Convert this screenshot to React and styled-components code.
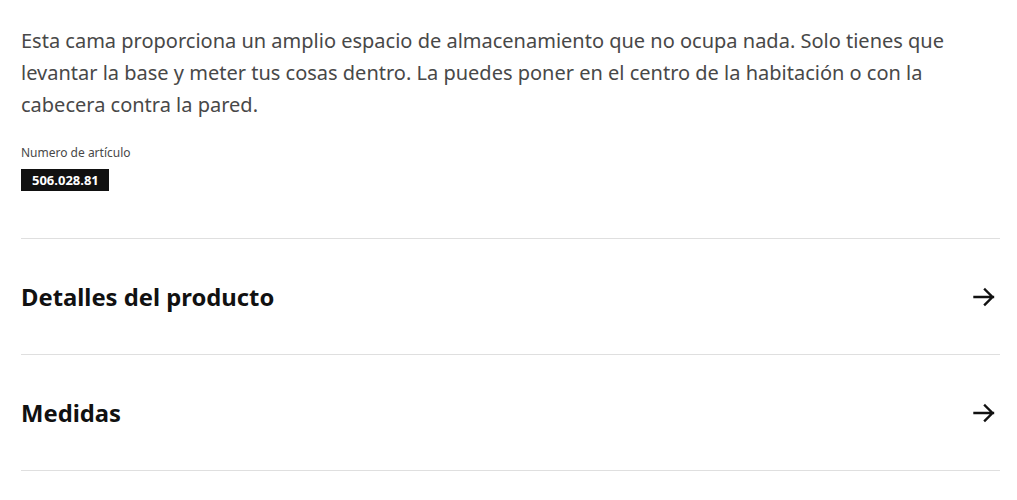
import React from 'react';
import styled, { createGlobalStyle } from 'styled-components';

const GlobalStyle = createGlobalStyle`
  body {
    margin: 0;
    background: #ffffff;
    font-family: "Noto Sans", "Open Sans", sans-serif;
    color: #111111;
  }
`;

const sections = ['Detalles del producto', 'Medidas'];

function ArrowRight() {
  return (
    <svg width="24" height="24" viewBox="0 0 24 24" fill="none">
      <path
        d="M2.5 12h18.5M13 4.5l7.5 7.5-7.5 7.5"
        stroke="#111111"
        strokeWidth="2.4"
        strokeLinecap="square"
      />
    </svg>
  );
}

export default function App() {
  return (
    <>
      <GlobalStyle />
      <Page>
        <Description>
          Esta cama proporciona un amplio espacio de almacenamiento que no ocupa nada. Solo tienes que
          levantar la base y meter tus cosas dentro. La puedes poner en el centro de la habitación o con la
          cabecera contra la pared.
        </Description>
        <ArticleBlock>
          <ArticleLabel>Numero de artículo</ArticleLabel>
          <ArticleNumber>506.028.81</ArticleNumber>
        </ArticleBlock>
        <SectionList>
          {sections.map(title => (
            <SectionRow key={title}>
              <SectionTitle>{title}</SectionTitle>
              <ArrowRight />
            </SectionRow>
          ))}
        </SectionList>
      </Page>
    </>
  );
}

const Page = styled.div`
  padding: 25px 17px 0 21px;
  width: 979px;
`;

const Description = styled.p`
  margin: 0;
  font-size: 20px;
  line-height: 32px;
  color: #484848;
`;

const ArticleBlock = styled.div`
  margin-top: 23px;
  display: flex;
  flex-direction: column;
  align-items: flex-start;
  gap: 7px;
`;

const ArticleLabel = styled.span`
  font-size: 12px;
  line-height: 18px;
  color: #484848;
`;

const ArticleNumber = styled.span`
  display: inline-block;
  background: #111111;
  color: #ffffff;
  font-size: 13px;
  font-weight: 700;
  line-height: 22px;
  padding: 0 10px 0 11px;
`;

const SectionList = styled.div`
  margin-top: 47px;
  border-top: 1px solid #dfdfdf;
`;

const SectionRow = styled.div`
  display: flex;
  align-items: center;
  justify-content: space-between;
  height: 115px;
  border-bottom: 1px solid #dfdfdf;
  padding-right: 4px;
`;

const SectionTitle = styled.h2`
  margin: 0;
  font-size: 23.8px;
  font-weight: 700;
  color: #111111;
`;
